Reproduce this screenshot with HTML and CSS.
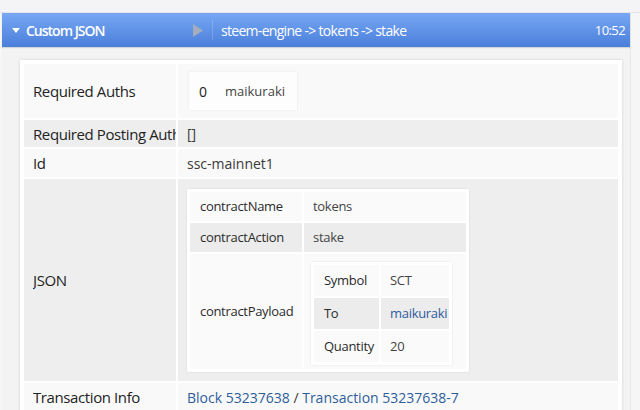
FILE: index.html
```html
<!DOCTYPE html>
<html>
<head>
<meta charset="utf-8">
<link rel="stylesheet" href="styles.css">
</head>
<body>
<div class="topstrip"></div>
<div class="frame">
  <div class="bar">
    <div class="bar-left">
      <svg class="caret" width="8" height="5" viewBox="0 0 8 5"><path d="M0 0H8L4 5Z" fill="#fff"/></svg>
      <span class="bar-title">Custom JSON</span>
    </div>
    <div class="bar-mid">
      <svg class="play" width="10" height="13" viewBox="0 0 10 13"><path d="M0 0L10 6.5L0 13Z" fill="#a3adbe"/></svg>
      <span class="divider"></span>
      <span class="bar-op">steem-engine -&gt; tokens -&gt; stake</span>
    </div>
    <span class="bar-time">10:52</span>
  </div>
  <div class="content">
    <div class="panel">
      <table class="kv">
        <tr class="r1">
          <td class="k"><div class="kclip">Required Auths</div></td>
          <td class="v">
            <table class="auth"><tr><td class="auth-n">0</td><td class="auth-name">maikuraki</td></tr></table>
          </td>
        </tr>
        <tr class="r2 alt">
          <td class="k"><div class="kclip">Required Posting Auths</div></td>
          <td class="v">[]</td>
        </tr>
        <tr class="r3">
          <td class="k"><div class="kclip">Id</div></td>
          <td class="v">ssc-mainnet1</td>
        </tr>
        <tr class="r4 alt">
          <td class="k"><div class="kclip">JSON</div></td>
          <td class="v vjson">
            <table class="nest">
              <tr class="n1"><td class="nk">contractName</td><td class="nv">tokens</td></tr>
              <tr class="n2 alt"><td class="nk">contractAction</td><td class="nv">stake</td></tr>
              <tr class="n3"><td class="nk">contractPayload</td><td class="nv npay">
                <table class="nest inner">
                  <tr class="i1"><td class="ik">Symbol</td><td class="iv">SCT</td></tr>
                  <tr class="i2 alt"><td class="ik">To</td><td class="iv"><span class="link">maikuraki</span></td></tr>
                  <tr class="i3"><td class="ik">Quantity</td><td class="iv">20</td></tr>
                </table>
              </td></tr>
            </table>
          </td>
        </tr>
        <tr class="r5">
          <td class="k"><div class="kclip">Transaction Info</div></td>
          <td class="v"><span class="link">Block 53237638</span> / <span class="link">Transaction 53237638-7</span></td>
        </tr>
      </table>
    </div>
  </div>
</div>
</body>
</html>
```
FILE: styles.css
```css
html, body {
  margin: 0;
  padding: 0;
}
body {
  width: 640px;
  height: 410px;
  overflow: hidden;
  background: #f6f6f7;
  font-family: "Open Sans", "DejaVu Sans", sans-serif;
  color: #2b2b2b;
}
.topstrip {
  height: 12px;
  background: #f4f4f6;
  border-bottom: 1px solid #e4e4e6;
}
.frame {
  margin-left: 2px;
  width: 628px;
  border-right: 1px solid #e6e6e6;
  background: #f3f3f3;
  height: 400px;
}
.bar {
  height: 34px;
  display: flex;
  align-items: center;
  background: linear-gradient(#77a7f4, #4a7fda);
  color: #fff;
  box-shadow: 0 1px 1px rgba(0,0,0,0.12);
}
.bar-left {
  display: flex;
  align-items: center;
  width: 191px;
}
.caret {
  margin-left: 10px;
  margin-right: 6px;
}
.bar-title {
  font-size: 14px;
  font-weight: 600;
  letter-spacing: -1px;
}
.bar-mid {
  display: flex;
  align-items: center;
  flex: 1;
}
.play {
  display: block;
}
.divider {
  width: 1px;
  height: 20px;
  background: rgba(255,255,255,0.18);
  margin: 0 8px 0 9px;
}
.bar-op {
  font-size: 14px;
  letter-spacing: -0.7px;
}
.bar-time {
  font-size: 13px;
  letter-spacing: -0.6px;
  margin-right: 5px;
}
.content {
  padding: 13px 8px 0 18px;
}
.panel {
  background: #fff;
  padding: 2px;
  box-shadow: 0 0 3px rgba(0,0,0,0.14);
  height: 400px;
}
table {
  border-collapse: separate;
}
.kv {
  width: 100%;
  border-spacing: 2px;
}
.kv td {
  background: #f9f9f9;
  vertical-align: middle;
  padding: 0 0 0 9px;
}
.kv tr.alt > td {
  background: #eeeeee;
}
.kv td.k {
  width: 143px;
  font-size: 15px;
  letter-spacing: -0.4px;
  color: #232323;
}
.kclip {
  width: 143px;
  white-space: nowrap;
  overflow: hidden;
}
.kv td.v {
  font-size: 14px;
  color: #3a3a3a;
}
.r1 > td { height: 54px; }
.r2 > td { height: 27px; }
.r3 > td { height: 28px; }
.r4 > td { height: 196px; }
.r5 > td { height: 28px; }
.kv .r4 > td.vjson {
  padding: 3px 0 3px 9px;
}
.auth {
  border-spacing: 0;
  background: #fdfdfd;
  box-shadow: 0 0 2px rgba(0,0,0,0.08);
  margin-left: 2px;
}
.kv .auth td {
  background: #fdfdfd;
  height: 38px;
  padding: 0;
}
.kv .auth td.auth-n {
  font-size: 14px;
  color: #222;
  padding-left: 10px;
  width: 26px;
}
.kv .auth td.auth-name {
  font-size: 13px;
  color: #444;
  padding-right: 12px;
}
.nest {
  border-spacing: 2px;
  background: #fff;
  padding: 1px;
  box-shadow: 0 0 2px rgba(0,0,0,0.1);
  width: 282px;
}
.kv .nest td {
  background: #fafafa;
  font-size: 13px;
  letter-spacing: -0.3px;
  color: #2b2b2b;
  padding: 0 0 0 10px;
}
.kv .nest tr.alt > td {
  background: #ececec;
}
.kv .nest td.nk {
  width: 102px;
}
.kv .nest td.nv {
  color: #444;
  padding-left: 9px;
}
.n1 > td, .n2 > td { height: 29px; }
.kv .nest td.npay {
  padding: 8px 0 4px 7px;
  height: 103px;
}
.nest.inner {
  width: 141px;
}
.kv .inner td.ik {
  width: 55px;
  height: 31px;
  color: #2b2b2b;
}
.kv .inner td.iv {
  padding-left: 9px;
  color: #444;
}
.link {
  color: #2f5f9f;
}
.kv td.v .link {
  color: #2e5d9c;
}
```
